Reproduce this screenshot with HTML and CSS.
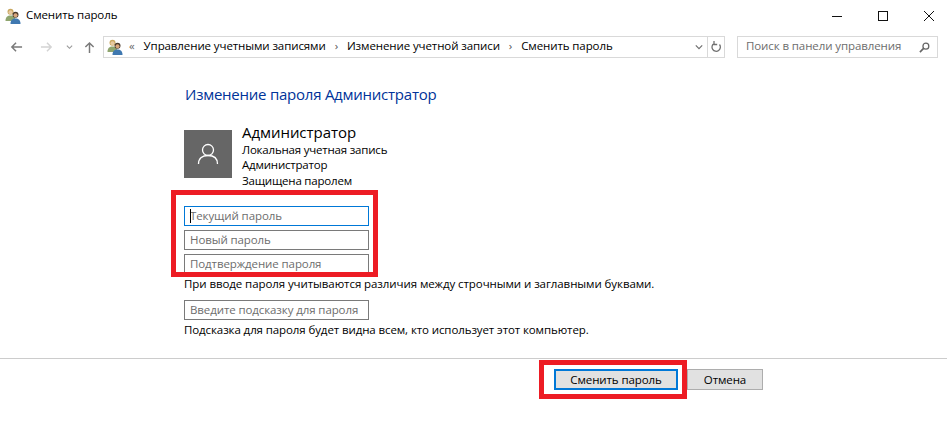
FILE: index.html
```html
<!DOCTYPE html>
<html lang="ru">
<head>
<meta charset="utf-8">
<title>Сменить пароль</title>
<link rel="stylesheet" href="styles.css">
</head>
<body>
<div class="titlebar">
  <svg class="users-icon" viewBox="0 0 16 16"><circle cx="5.500" cy="3.800" r="3" fill="#c9a860"/><circle cx="5.500" cy="4.300" r="2" fill="#e8c9a0"/><path d="M.5 13c0-4 2-5.500 5-5.500s5 1.500 5 5.500z" fill="#8fa56e"/><circle cx="10.500" cy="6.800" r="3" fill="#4a3a2c"/><circle cx="10.500" cy="7.300" r="2" fill="#d9a77c"/><path d="M5.500 16c0-4 2-5.500 5-5.500s5 1.500 5 5.500z" fill="#3f78b0"/></svg>
  <span class="title">Сменить пароль</span>
  <div class="winctl">
    <svg class="winbtn" viewBox="0 0 12 12"><path d="M1 6.500h10" stroke="#111" fill="none"/></svg>
    <svg class="winbtn" viewBox="0 0 12 12"><rect x="1.500" y="1.500" width="9" height="9" stroke="#111" fill="none"/></svg>
    <svg class="winbtn" viewBox="0 0 12 12"><path d="M1 1l10 10M11 1L1 11" stroke="#111" fill="none"/></svg>
  </div>
</div>
<div class="navbar">
  <div class="navbtns">
    <svg class="nav nav-back" viewBox="0 0 14 12"><path d="M13 6H2M6.500 1.500L2 6l4.500 4.500" stroke="#7a7a7a" stroke-width="1.600" fill="none"/></svg>
    <svg class="nav nav-fwd" viewBox="0 0 14 12"><path d="M1 6h11M7.500 1.500L12 6l-4.500 4.500" stroke="#d4d4d4" stroke-width="1.600" fill="none"/></svg>
    <svg class="nav nav-drop" viewBox="0 0 8 6"><path d="M1 1.500L4 4.500l3-3" stroke="#999" stroke-width="1.300" fill="none"/></svg>
    <svg class="nav nav-up" viewBox="0 0 12 14"><path d="M6 13V2M1.500 6.500L6 2l4.500 4.500" stroke="#7a7a7a" stroke-width="1.600" fill="none"/></svg>
  </div>
  <div class="address">
    <svg class="users-icon" viewBox="0 0 16 16"><circle cx="5.500" cy="3.800" r="3" fill="#c9a860"/><circle cx="5.500" cy="4.300" r="2" fill="#e8c9a0"/><path d="M.5 13c0-4 2-5.500 5-5.500s5 1.500 5 5.500z" fill="#8fa56e"/><circle cx="10.500" cy="6.800" r="3" fill="#4a3a2c"/><circle cx="10.500" cy="7.300" r="2" fill="#d9a77c"/><path d="M5.500 16c0-4 2-5.500 5-5.500s5 1.500 5 5.500z" fill="#3f78b0"/></svg>
    <span class="crumb-more">«</span>
    <span class="crumb">Управление учетными записями</span>
    <span class="sep">›</span>
    <span class="crumb">Изменение учетной записи</span>
    <span class="sep">›</span>
    <span class="crumb">Сменить пароль</span>
    <svg class="addr-drop" viewBox="0 0 10 6"><path d="M1 1l4 4 4-4" stroke="#707070" stroke-width="1.500" fill="none"/></svg>
    <div class="refresh">
      <svg class="refresh-icon" viewBox="0 0 12 12"><path d="M9.500 3.500A4.200 4.200 0 1 1 4 2.500M4 0v3.500h3.200" stroke="#707070" stroke-width="1.300" fill="none"/></svg>
    </div>
  </div>
  <div class="search">
    <span class="search-text">Поиск в панели управления</span>
    <svg class="search-icon" viewBox="0 0 12 12"><circle cx="7.500" cy="4.500" r="3.200" stroke="#666" stroke-width="1.400" fill="none"/><path d="M5 7l-4 4" stroke="#666" stroke-width="1.800"/></svg>
  </div>
</div>
<main class="content">
  <h1 class="heading">Изменение пароля Администратор</h1>
  <div class="account">
    <div class="avatar">
      <svg viewBox="0 0 24 24" class="avatar-icon"><circle cx="12" cy="8" r="5.500" stroke="#fff" stroke-width="1.300" fill="none"/><path d="M2.500 22c0-6 4-8.500 9.500-8.500s9.500 2.500 9.500 8.500" stroke="#fff" stroke-width="1.300" fill="none"/></svg>
    </div>
    <div class="account-info">
      <div class="account-name">Администратор</div>
      <div class="account-line">Локальная учетная запись</div>
      <div class="account-line">Администратор</div>
      <div class="account-line">Защищена паролем</div>
    </div>
  </div>
  <div class="fields">
    <div class="field field-focus"><span class="caret"></span>Текущий пароль</div>
    <div class="field">Новый пароль</div>
    <div class="field">Подтверждение пароля</div>
    <div class="red-frame frame-fields"></div>
  </div>
  <p class="note note-long">При вводе пароля учитываются различия между строчными и заглавными буквами.</p>
  <div class="field field-hint">Введите подсказку для пароля</div>
  <p class="note">Подсказка для пароля будет видна всем, кто использует этот компьютер.</p>
</main>
<footer class="footer">
  <div class="primary-wrap">
    <button class="btn btn-primary">Сменить пароль</button>
    <div class="red-frame frame-button"></div>
  </div>
  <button class="btn">Отмена</button>
</footer>
</body>
</html>
```
FILE: styles.css
```css
* { box-sizing: border-box; }
html, body { margin: 0; padding: 0; }
body {
  width: 947px;
  height: 427px;
  overflow: hidden;
  background: #fff;
  color: #000;
  font-family: "Open Sans", "Noto Sans", sans-serif;
  font-size: 11.5px;
  letter-spacing: -0.1px;
  line-height: 16px;
}
.titlebar {
  display: flex;
  align-items: center;
  height: 31px;
  padding-left: 5px;
}
.users-icon { width: 16px; height: 16px; flex: none; }
.title { margin-left: 5px; padding-bottom: 2px; }
.winctl { margin-left: auto; display: flex; padding-right: 12px; gap: 34px; }
.winbtn { width: 12px; height: 12px; }
.navbar {
  display: flex;
  align-items: center;
  height: 22px;
  margin-top: 5px;
}
.navbtns { display: flex; align-items: center; width: 103px; padding-left: 10px; }
.nav-back, .nav-fwd { width: 13px; height: 12px; }
.nav-fwd { margin-left: 17px; }
.nav-drop { width: 7px; height: 6px; margin-left: 13px; }
.nav-up { width: 11px; height: 13px; margin-left: 11px; }
.address {
  display: flex;
  align-items: center;
  width: 622px;
  height: 22px;
  border: 1px solid #d9d9d9;
  padding-left: 3px;
}
.crumb-more { margin-left: 6px; color: #666; padding-bottom: 2px; }
.crumb { margin-left: 9px; padding-bottom: 2px; }
.sep { margin-left: 9px; color: #555; padding-bottom: 2px; }
.addr-drop { width: 8px; height: 6px; margin-left: auto; margin-right: 4px; }
.refresh {
  width: 17px;
  height: 20px;
  border-left: 1px solid #d9d9d9;
  display: flex;
  align-items: center;
  justify-content: center;
}
.refresh-icon { width: 12px; height: 12px; }
.search {
  display: flex;
  align-items: center;
  width: 201px;
  height: 22px;
  margin-left: 12px;
  border: 1px solid #d9d9d9;
  padding: 0 7px 0 8px;
  color: #6d6d6d;
}
.search-text { padding-bottom: 2px; }
.search-icon { width: 11px; height: 11px; margin-left: auto; }
.content { padding: 26px 0 0 184px; }
.heading {
  margin: 0 0 0 1px;
  font-size: 15px;
  letter-spacing: -0.24px;
  line-height: 20px;
  font-weight: 400;
  color: #003399;
}
.account { display: flex; height: 48px; margin-top: 26px; }
.avatar {
  width: 48px;
  height: 48px;
  background: #666;
  display: flex;
  align-items: center;
  justify-content: center;
}
.avatar-icon { width: 24px; height: 24px; }
.account-info { margin-left: 10px; margin-top: -8px; }
.account-name { font-size: 15px; letter-spacing: -0.05px; line-height: 20px; }
.account-line { line-height: 15.4px; letter-spacing: -0.2px; }
.fields { position: relative; margin-top: 28px; display: flex; flex-direction: column; gap: 4px; width: 185px; }
.field {
  position: relative;
  width: 185px;
  height: 20px;
  border: 1px solid #7a7a7a;
  padding-left: 5px;
  line-height: 18px;
  color: #6d6d6d;
  white-space: nowrap;
}
.field-focus { border-color: #0078d7; }
.caret { position: absolute; left: 5px; top: 2px; width: 1px; height: 14px; background: #000; }
.field-hint { margin-top: 8px; }
.note { margin: 2px 0 0; line-height: 16px; white-space: nowrap; }
.note-long { letter-spacing: -0.08px; }
.red-frame { position: absolute; border: 5px solid #ed1c24; pointer-events: none; }
.frame-fields { left: -13px; top: -16px; width: 207px; height: 87px; }
.footer {
  position: relative;
  display: flex;
  align-items: flex-start;
  border-top: 1px solid #ccc;
  margin-top: 20px;
  padding: 10px 0 0 554px;
  gap: 9px;
}
.primary-wrap { position: relative; }
.btn {
  display: block;
  width: 76px;
  height: 21px;
  background: #e1e1e1;
  border: 1px solid #adadad;
  font: inherit;
  letter-spacing: inherit;
  line-height: 18px;
  padding: 0;
  color: #000;
}
.btn-primary { width: 124px; border: 2px solid #0078d7; }
.frame-button { left: -15px; top: -9px; width: 148px; height: 39px; }
```
